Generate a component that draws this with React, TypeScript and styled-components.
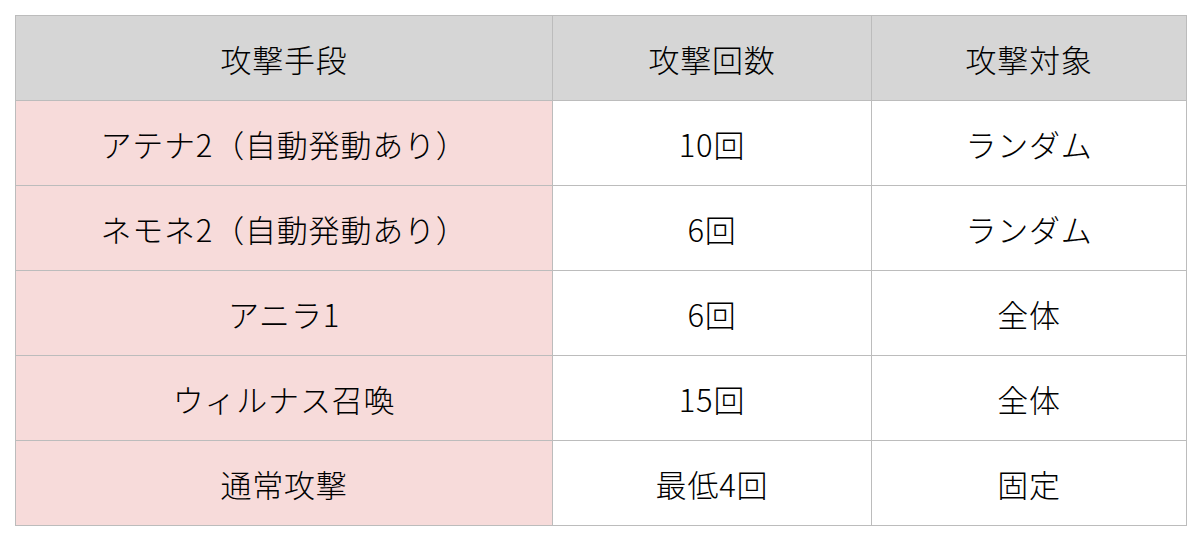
import React from 'react'
import styled, { createGlobalStyle } from 'styled-components'

const GlobalStyle = createGlobalStyle`
  html, body {
    margin: 0;
    padding: 0;
    background: #ffffff;
  }
  body {
    font-family: 'Noto Sans CJK JP', 'Noto Sans', sans-serif;
  }
`

const Page = styled.div`
  padding: 15px 14px 15px 15px;
`

const Table = styled.table`
  width: 1171px;
  border-collapse: collapse;
  table-layout: fixed;
  border: 1px solid #bcbcbc;
`

const Cell = styled.td<{ $tone?: 'head' | 'pink' }>`
  height: 84px;
  padding: 0;
  border: 1px solid #bcbcbc;
  text-align: center;
  vertical-align: middle;
  font-size: 31px;
  font-weight: 300;
  color: #000000;
  letter-spacing: 0.8px;
  background: ${(p) =>
    p.$tone === 'head' ? '#d6d6d6' : p.$tone === 'pink' ? '#f7dbda' : '#ffffff'};
`

const rows = [
  ['アテナ2（自動発動あり）', '10回', 'ランダム'],
  ['ネモネ2（自動発動あり）', '6回', 'ランダム'],
  ['アニラ1', '6回', '全体'],
  ['ウィルナス召喚', '15回', '全体'],
  ['通常攻撃', '最低4回', '固定'],
]

const App = () => {
  return (
    <Page>
      <GlobalStyle />
      <Table>
        <colgroup>
          <col style={{ width: 537 }} />
          <col style={{ width: 319 }} />
          <col style={{ width: 315 }} />
        </colgroup>
        <thead>
          <tr>
            <Cell as='th' $tone='head'>攻撃手段</Cell>
            <Cell as='th' $tone='head'>攻撃回数</Cell>
            <Cell as='th' $tone='head'>攻撃対象</Cell>
          </tr>
        </thead>
        <tbody>
          {rows.map((r) => (
            <tr key={r[0]}>
              <Cell $tone='pink'>{r[0]}</Cell>
              <Cell>{r[1]}</Cell>
              <Cell>{r[2]}</Cell>
            </tr>
          ))}
        </tbody>
      </Table>
    </Page>
  )
}

export default App
